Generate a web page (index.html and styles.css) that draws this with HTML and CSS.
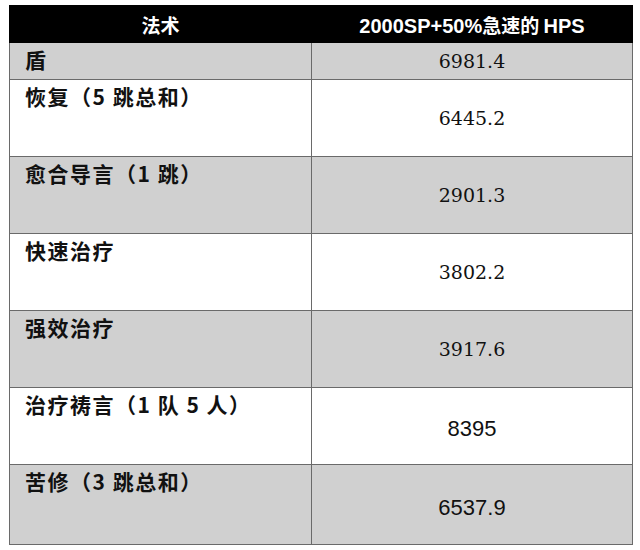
FILE: index.html
```html
<!DOCTYPE html>
<html lang="zh-CN">
<head>
<meta charset="utf-8">
<link rel="stylesheet" href="styles.css">
</head>
<body>
<div class="page">
  <table class="hps">
    <thead>
      <tr class="head">
        <th class="c1">法术</th>
        <th class="c2"><span class="hnum">2000SP+50%</span>急速的 <span class="hnum">HPS</span></th>
      </tr>
    </thead>
    <tbody>
      <tr class="short gray">
        <td class="label">盾</td>
        <td class="num serif">6981.4</td>
      </tr>
      <tr class="tall">
        <td class="label">恢复（5 跳总和）</td>
        <td class="num serif">6445.2</td>
      </tr>
      <tr class="tall gray">
        <td class="label">愈合导言（1 跳）</td>
        <td class="num serif">2901.3</td>
      </tr>
      <tr class="tall">
        <td class="label">快速治疗</td>
        <td class="num serif">3802.2</td>
      </tr>
      <tr class="tall gray">
        <td class="label">强效治疗</td>
        <td class="num serif">3917.6</td>
      </tr>
      <tr class="tall">
        <td class="label">治疗祷言（1 队 5 人）</td>
        <td class="num narrow">8395</td>
      </tr>
      <tr class="last gray">
        <td class="label">苦修（3 跳总和）</td>
        <td class="num narrow">6537.9</td>
      </tr>
    </tbody>
  </table>
</div>
</body>
</html>
```

FILE: styles.css
```css
html, body {
  margin: 0;
  padding: 0;
  background: #ffffff;
}

.page {
  padding: 5px 0 0 9px;
}

.hps {
  border-collapse: collapse;
  width: 624px;
  table-layout: fixed;
  border: 1px solid #4a4a4a;
}

.hps .c1 { width: 301px; }

.head th {
  background: #000000;
  color: #ffffff;
  height: 36px;
  padding: 0;
  text-align: center;
  vertical-align: middle;
  font-family: "Noto Sans CJK SC", sans-serif;
  font-weight: 700;
  font-size: 19px;
  border: 1px solid #000000;
}

.hnum {
  font-family: "Liberation Sans Narrow", "Liberation Sans", "Noto Sans CJK SC", sans-serif;
  font-weight: 700;
  font-size: 20px;
}

.hps td {
  box-sizing: border-box;
  border: 1px solid #6a6a6a;
  padding: 0;
  color: #111111;
}

.gray td {
  background: #d0d0d0;
}

.short td { height: 37px; }
.tall td { height: 77px; }
.last td { height: 80px; }

.hps td.label {
  vertical-align: top;
  padding: 3px 0 0 15px;
  font-family: "Noto Sans CJK SC", sans-serif;
  font-weight: 700;
  font-size: 21px;
  letter-spacing: 1.5px;
  line-height: 27px;
  text-align: left;
}

.short td.label {
  padding-top: 3px;
}

.num {
  text-align: center;
  vertical-align: middle;
  font-size: 19px;
}

.serif {
  font-family: "DejaVu Serif", "Liberation Serif", serif;
}

.hps td.narrow {
  font-family: "Liberation Sans Narrow", "Liberation Sans", sans-serif;
  font-size: 22px;
  padding-top: 6px;
}
```
